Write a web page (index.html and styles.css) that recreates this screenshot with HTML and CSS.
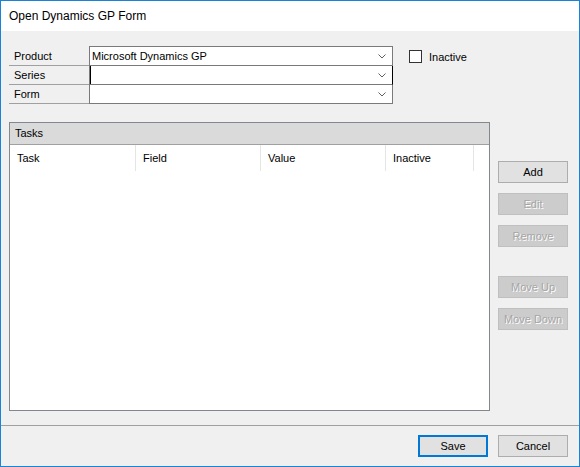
FILE: index.html
```html
<!DOCTYPE html>
<html>
<head>
<meta charset="utf-8">
<link rel="stylesheet" href="styles.css">
</head>
<body>
<div class="window">
  <div class="titlebar">Open Dynamics GP Form</div>
  <div class="content">
    <div class="top-row">
      <div class="form">
        <div class="form-row first">
          <div class="label">Product</div>
          <div class="combo"><span class="value">Microsoft Dynamics GP</span><svg class="chev" width="8" height="5" viewBox="0 0 8 5"><path d="M0.5 0.5 L4 4 L7.5 0.5" fill="none" stroke="#606060" stroke-width="1"/></svg></div>
        </div>
        <div class="form-row">
          <div class="label">Series</div>
          <div class="combo focus"><span class="caret"></span><span class="value"></span><svg class="chev" width="8" height="5" viewBox="0 0 8 5"><path d="M0.5 0.5 L4 4 L7.5 0.5" fill="none" stroke="#606060" stroke-width="1"/></svg></div>
        </div>
        <div class="form-row">
          <div class="label">Form</div>
          <div class="combo"><span class="value"></span><svg class="chev" width="8" height="5" viewBox="0 0 8 5"><path d="M0.5 0.5 L4 4 L7.5 0.5" fill="none" stroke="#606060" stroke-width="1"/></svg></div>
        </div>
      </div>
      <label class="check"><span class="box"></span><span>Inactive</span></label>
    </div>
    <div class="middle">
      <div class="panel">
        <div class="panel-head">Tasks</div>
        <div class="cols">
          <div class="col c1">Task</div>
          <div class="col c2">Field</div>
          <div class="col c3">Value</div>
          <div class="col c4">Inactive</div>
        </div>
      </div>
      <div class="side">
        <button class="btn">Add</button>
        <button class="btn disabled">Edit</button>
        <button class="btn disabled">Remove</button>
        <button class="btn disabled gap">Move Up</button>
        <button class="btn disabled">Move Down</button>
      </div>
    </div>
  </div>
  <div class="footer">
    <button class="btn default">Save</button>
    <button class="btn">Cancel</button>
  </div>
</div>
</body>
</html>
```

FILE: styles.css
```css
* { box-sizing: border-box; }
html, body { margin: 0; padding: 0; }
body {
  width: 580px;
  height: 467px;
  font-family: "Liberation Sans", Arial, sans-serif;
  font-size: 11px;
  color: #000;
  background: #f0f0f0;
}
.window {
  width: 580px;
  height: 467px;
  border: 1px solid #1883d7;
  display: flex;
  flex-direction: column;
  background: #f0f0f0;
}
.titlebar {
  height: 30px;
  background: #fff;
  padding-left: 8px;
  line-height: 30px;
  font-size: 12px;
}
.content {
  flex: 1;
  padding: 15px 0 0 8px;
}
.top-row {
  display: flex;
  align-items: flex-start;
}
.form {
  display: flex;
  flex-direction: column;
}
.form-row {
  display: flex;
  height: 19px;
}
.form-row.first { height: 20px; }
.label {
  width: 80px;
  border-bottom: 1px solid #a0a0a0;
  padding-left: 5px;
  display: flex;
  align-items: center;
}
.combo {
  width: 304px;
  background: #fff;
  border: 1px solid #7a7a7a;
  border-top: none;
  display: flex;
  align-items: center;
  padding-left: 2px;
  padding-right: 6px;
  position: relative;
}
.form-row.first .combo { border-top: 1px solid #7a7a7a; }
.combo.focus { border-right-color: #000; }
.caret {
  position: absolute;
  left: 0;
  top: 0;
  width: 1px;
  height: 18px;
  background: #000;
}
.value { flex: 1; }
.chev { display: block; }
.check {
  display: flex;
  align-items: center;
  margin-left: 16px;
  margin-top: 4px;
}
.box {
  width: 13px;
  height: 13px;
  border: 1px solid #333;
  background: #fff;
  margin-right: 7px;
}
.middle {
  display: flex;
  margin-top: 18px;
  align-items: flex-start;
}
.panel {
  width: 481px;
  height: 289px;
  border: 1px solid #828790;
  background: #fff;
}
.panel-head {
  height: 22px;
  background: #dadada;
  border-bottom: 1px solid #a0a0a0;
  padding-left: 5px;
  line-height: 21px;
}
.cols {
  display: flex;
  height: 26px;
}
.col {
  border-right: 1px solid #e5e5e5;
  padding-left: 7px;
  line-height: 26px;
}
.c1 { width: 126px; }
.c2 { width: 125px; }
.c3 { width: 125px; }
.c4 { width: 88px; }
.side {
  display: flex;
  flex-direction: column;
  gap: 10px;
  margin-left: 8px;
  padding-top: 39px;
}
.btn {
  width: 70px;
  height: 22px;
  border: 1px solid #adadad;
  background: #e1e1e1;
  font-family: "Liberation Sans", Arial, sans-serif;
  font-size: 11px;
  font-weight: normal;
  color: #000;
  padding: 0;
  margin: 0;
}
.btn.disabled {
  background: #cccccc;
  border-color: #bfbfbf;
  color: #a6a6a6;
  text-shadow: 1px 1px 0 #fff;
}
.btn.gap { margin-top: 19px; }
.btn.default {
  border: 2px solid #0078d7;
}
.footer {
  height: 41px;
  border-top: 1px solid #a0a0a0;
  display: flex;
  justify-content: flex-end;
  align-items: flex-start;
  gap: 10px;
  padding-top: 9px;
  padding-right: 11px;
}
```
